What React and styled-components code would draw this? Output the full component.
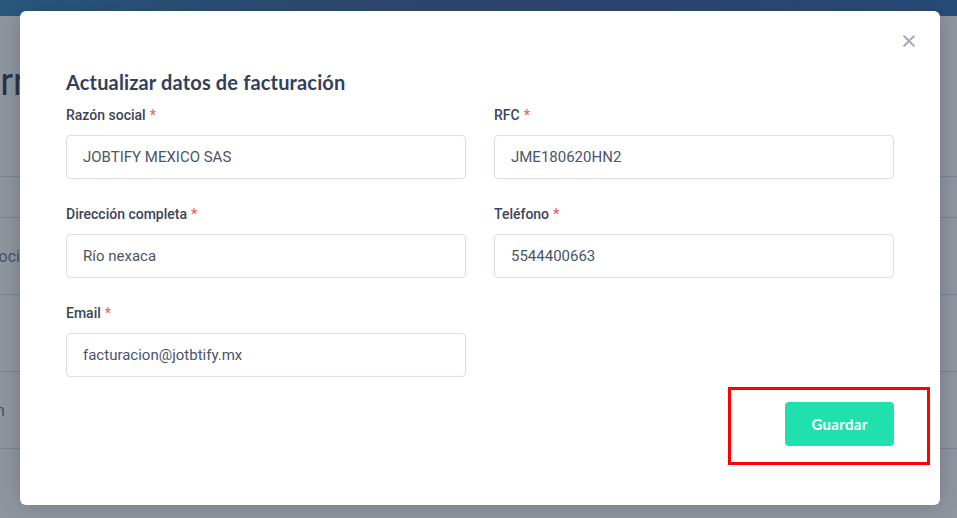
import React from "react";
import styled, { createGlobalStyle } from "styled-components";

const GlobalStyle = createGlobalStyle`
  * { box-sizing: border-box; }
  html, body { margin: 0; padding: 0; }
  body {
    width: 957px;
    height: 518px;
    overflow: hidden;
    background: #ffffff;
    font-family: Roboto, "Liberation Sans", Arial, sans-serif;
  }
`;

const Page = styled.div`
  position: relative;
  width: 957px;
  height: 518px;
  overflow: hidden;
  background: #ffffff;
`;

const TopBar = styled.div`
  height: 16px;
  background: linear-gradient(90deg, #2f82b8 0%, #3e5ea3 45%, #3a5ea6 70%, #2f69b0 100%);
`;

const PageBody = styled.div`
  display: flex;
  flex-direction: column;
`;

const PageTitle = styled.h1`
  margin: 44px 0 0 -66px;
  font-family: Roboto, "Liberation Sans", sans-serif;
  font-weight: 400;
  font-size: 38px;
  line-height: 44px;
  color: #2f3a4d;
  white-space: nowrap;
`;

const Table = styled.div`
  margin-top: 72px;
  display: flex;
  flex-direction: column;
`;

const TableRow = styled.div`
  height: ${(p) => p.$h}px;
  border-top: 1px solid #d4d9e0;
  display: flex;
  align-items: center;
`;

const RowText = styled.span`
  margin-left: ${(p) => p.$offset}px;
  font-family: Roboto, sans-serif;
  font-size: 16px;
  color: #6b7688;
  white-space: nowrap;
`;

const Backdrop = styled.div`
  position: absolute;
  inset: 0;
  background: rgba(34, 48, 68, 0.5);
  display: flex;
  align-items: flex-start;
  justify-content: flex-start;
  padding: 11px 0 0 20px;
`;

const Modal = styled.div`
  position: relative;
  width: 920px;
  height: 494px;
  background: #ffffff;
  border-radius: 6px;
  box-shadow: 0 0 24px rgba(20, 30, 45, 0.25);
  padding: 59px 46px 0 46px;
  display: flex;
  flex-direction: column;
`;

const CloseButton = styled.button`
  position: absolute;
  top: 18px;
  right: 19px;
  width: 24px;
  height: 24px;
  padding: 0;
  border: none;
  background: transparent;
  display: flex;
  align-items: center;
  justify-content: center;
  cursor: pointer;
`;

const Title = styled.h2`
  margin: 0;
  font-family: Lato, "Open Sans", sans-serif;
  font-weight: 700;
  font-size: 20px;
  line-height: 24px;
  letter-spacing: 0.15px;
  color: #334058;
`;

const FormGrid = styled.div`
  margin-top: 11px;
  display: grid;
  grid-template-columns: 400px 400px;
  column-gap: 28px;
  row-gap: 25px;
`;

const Field = styled.div`
  display: flex;
  flex-direction: column;
  gap: 10px;
`;

const Label = styled.label`
  font-family: Roboto, sans-serif;
  font-weight: 500;
  font-size: 14px;
  line-height: 20px;
  color: #3b4558;
`;

const Required = styled.span`
  color: #f0625f;
  margin-left: 4px;
`;

const Input = styled.input`
  width: 100%;
  height: 44px;
  border: 1px solid #d8dde6;
  border-radius: 4px;
  padding: 0 16px;
  font-family: Roboto, sans-serif;
  font-size: 15px;
  color: #4a5569;
  background: #ffffff;
  outline: none;
`;

const Footer = styled.div`
  margin-top: 25px;
  display: flex;
  justify-content: flex-end;
`;

const SaveButton = styled.button`
  width: 109px;
  height: 44px;
  border: none;
  border-radius: 4px;
  background: #20e0ae;
  color: #ffffff;
  font-family: Lato, "Open Sans", sans-serif;
  font-weight: 700;
  font-size: 15px;
  letter-spacing: 0.3px;
  cursor: pointer;
`;

const Highlight = styled.div`
  position: absolute;
  left: 728px;
  top: 387px;
  width: 202px;
  height: 78px;
  border: 3px solid #ff0000;
  pointer-events: none;
`;

const fields = [
  { label: "Razón social", value: "JOBTIFY MEXICO SAS" },
  { label: "RFC", value: "JME180620HN2" },
  { label: "Dirección completa", value: "Río nexaca" },
  { label: "Teléfono", value: "5544400663" },
  { label: "Email", value: "facturacion@jotbtify.mx" },
];

export default function App() {
  return (
    <>
      <GlobalStyle />
      <Page>
        <TopBar />
        <PageBody>
          <PageTitle>Información</PageTitle>
          <Table>
            <TableRow $h={41} />
            <TableRow $h={77}>
              <RowText $offset={-58}>Razón social</RowText>
            </TableRow>
            <TableRow $h={77} />
            <TableRow $h={77}>
              <RowText $offset={-62}>Dirección</RowText>
            </TableRow>
            <TableRow $h={77} />
          </Table>
        </PageBody>
        <Backdrop>
          <Modal>
            <CloseButton aria-label="Cerrar">
              <svg width="12" height="12" viewBox="0 0 12 12">
                <path d="M1.2 1.2 L10.8 10.8 M10.8 1.2 L1.2 10.8" stroke="#a3abba" strokeWidth="2" strokeLinecap="round" />
              </svg>
            </CloseButton>
            <Title>Actualizar datos de facturación</Title>
            <FormGrid>
              {fields.map((f) => (
                <Field key={f.label}>
                  <Label>
                    {f.label}
                    <Required>*</Required>
                  </Label>
                  <Input defaultValue={f.value} readOnly />
                </Field>
              ))}
            </FormGrid>
            <Footer>
              <SaveButton>Guardar</SaveButton>
            </Footer>
          </Modal>
        </Backdrop>
        <Highlight />
      </Page>
    </>
  );
}
